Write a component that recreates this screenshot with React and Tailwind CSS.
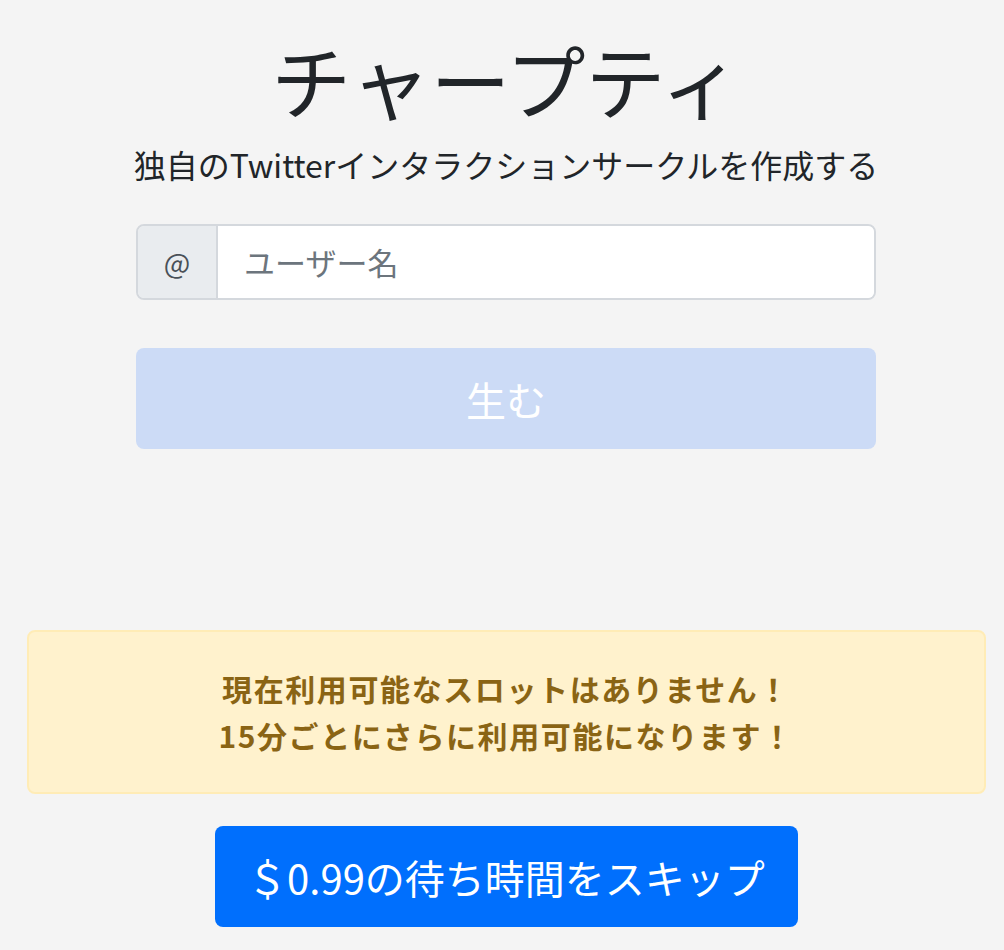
export default function App() {
  return (
    <div
      className="min-h-[950px] bg-[#f4f4f4] text-[#212529] flex flex-col items-center pl-[8px]"
      style={{ fontFamily: '"Noto Sans CJK JP", "Noto Sans", sans-serif' }}
    >
      <h1 className="mt-[26px] text-[80px] leading-[104px] font-normal">チャープティ</h1>
      <p className="mt-[12px] text-[32px] leading-[44px]">独自のTwitterインタラクションサークルを作成する</p>

      <div className="mt-[38px] w-[740px] h-[76px] flex border-2 border-[#d4d8dd] rounded-[8px] overflow-hidden">
        <div className="w-[80px] bg-[#e9ecef] border-r-2 border-[#d4d8dd] flex items-center justify-center text-[28px] text-[#495057]">
          @
        </div>
        <input
          className="flex-1 bg-white px-[26px] text-[31px] text-[#495057] placeholder:text-[#6c757d] outline-none"
          placeholder="ユーザー名"
        />
      </div>

      <button
        disabled
        className="mt-[48px] w-[740px] h-[101px] rounded-[8px] bg-[#ccdbf6] text-white text-[40px]"
      >
        生む
      </button>

      <div className="mt-[181px] w-[959px] h-[164px] bg-[#fff2cd] border-2 border-[#ffecb6] rounded-[8px] flex flex-col items-center justify-center text-[#8a6414] text-[30px] leading-[47px] font-bold tracking-[1.6px]">
        <div>現在利用可能なスロットはありません！</div>
        <div>15分ごとにさらに利用可能になります！</div>
      </div>

      <button className="mt-[32px] w-[583px] h-[101px] rounded-[8px] bg-[#006ffd] text-white text-[40px]">
        ＄0.99の待ち時間をスキップ
      </button>
    </div>
  );
}
